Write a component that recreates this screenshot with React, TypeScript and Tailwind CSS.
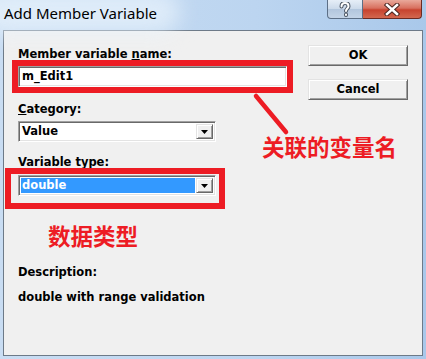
import React from 'react'

const sans = { fontFamily: '"DejaVu Sans", "Liberation Sans", sans-serif' }
const cjk = { fontFamily: '"Noto Sans CJK SC", "Noto Sans", sans-serif' }

// classic sunken 3D border (edit / combo field)
const sunken =
  'border border-t-[#a0a0a0] border-l-[#a0a0a0] border-r-white border-b-white shadow-[inset_1px_1px_0_#696969,inset_-1px_-1px_0_#e3e3e3]'

// classic raised 3D border (push button / drop button)
const raised =
  'border border-t-[#e3e3e3] border-l-[#e3e3e3] border-r-[#696969] border-b-[#696969] shadow-[inset_1px_1px_0_#ffffff,inset_-1px_-1px_0_#a0a0a0]'

function DropArrow() {
  return (
    <div className={`flex h-full w-[17px] items-center justify-center bg-[#f0f0f0] ${raised}`}>
      <svg width="7" height="4" viewBox="0 0 7 4">
        <path d="M0 0h7L3.5 4z" fill="#000" />
      </svg>
    </div>
  )
}

function Combo({ value, selected }: { value: string; selected?: boolean }) {
  return (
    <div className={`flex h-[21px] w-[198px] bg-white p-[2px] ${sunken}`}>
      <div className="flex flex-1 items-center pr-[1px]">
        <div
          className={`flex h-full flex-1 items-center pl-[1px] ${
            selected ? 'bg-[#3399ff] text-white' : 'text-black'
          }`}
        >
          {value}
        </div>
      </div>
      <DropArrow />
    </div>
  )
}

function Label({ children, className = '' }: { children: React.ReactNode; className?: string }) {
  return <div className={`h-[14px] leading-[14px] ${className}`}>{children}</div>
}

function DialogButton({ children }: { children: React.ReactNode }) {
  return (
    <button
      className={`flex h-[21px] w-[100px] items-center justify-center bg-[#f0f0f0] text-black ${raised}`}
    >
      {children}
    </button>
  )
}

export default function App() {
  return (
    <div className="relative h-[359px] w-[426px] overflow-hidden bg-[linear-gradient(90deg,#c9ddf3_0%,#bcd5f0_60%,#a9c8ea_100%)]">
      {/* Title bar */}
      <div className="relative flex h-[30px] items-start">
        <div className="absolute left-[-20px] top-[-10px] h-[44px] w-[200px] rounded-full bg-[#eaf3fc]/70 blur-[10px]" />
        <div
          className="relative pl-[4px] pt-[3px] text-[15px] leading-[20px] text-black"
          style={{ fontFamily: '"Noto Sans", "Open Sans", sans-serif' }}
        >
          Add Member Variable
        </div>
        <div className="ml-auto mr-[4px] flex h-[19px]">
          <div className="flex w-[36px] items-center justify-center rounded-bl-[4px] border border-t-0 border-[#5c6f86] bg-[linear-gradient(180deg,#e6eef7_0%,#ccdaea_48%,#b2c6dd_52%,#c3d4e7_100%)]">
            <svg width="12" height="15" viewBox="0 0 12 15">
              <path
                d="M2.5 4.5C2.5 2 4 1 6 1s3.5 1 3.5 3.2c0 2.2-2.5 2.5-2.5 4.8M7 12.5v.5"
                fill="none"
                stroke="#4a5563"
                strokeWidth="4"
                strokeLinecap="round"
              />
              <path
                d="M2.5 4.5C2.5 2 4 1 6 1s3.5 1 3.5 3.2c0 2.2-2.5 2.5-2.5 4.8M7 12.5v.5"
                fill="none"
                stroke="#fff"
                strokeWidth="2"
                strokeLinecap="round"
              />
            </svg>
          </div>
          <div className="flex w-[59px] items-center justify-center rounded-br-[4px] border border-l-0 border-t-0 border-[#6b2a23] bg-[linear-gradient(180deg,#e9a99b_0%,#d8705f_45%,#c7432f_55%,#d3674f_100%)]">
            <svg width="16" height="13" viewBox="0 0 16 13">
              <path d="M3 2l10 9M13 2L3 11" stroke="#4a2520" strokeWidth="4.5" strokeLinecap="square" />
              <path d="M3 2l10 9M13 2L3 11" stroke="#fff" strokeWidth="2.5" strokeLinecap="square" />
            </svg>
          </div>
        </div>
      </div>

      {/* Client area */}
      <div
        className="mx-[3px] flex h-[326px] border border-[#6d7a88] bg-[#f0f0f0] text-[11.5px] font-bold text-black"
        style={sans}
      >
        {/* Left column */}
        <div className="flex flex-1 flex-col pl-[14px] pt-[16px]">
          <Label>
            Member variable <span className="underline">n</span>ame:
          </Label>
          <div className="-ml-[6px] -mt-[1px] w-[281px] border-[6px] border-[#ed1c24]">
            <div className={`flex h-[21px] w-[269px] items-center bg-white pl-[3px] ${sunken}`}>
              m_Edit1
            </div>
          </div>

          <Label className="mt-[9px]">
            <span className="underline">C</span>ategory:
          </Label>
          <div className="mt-[5px]">
            <Combo value="Value" />
          </div>

          <Label className="mt-[13px]">Variable type:</Label>
          <div className="-ml-[13px] -mt-[1px] w-[220px] border-[6px] border-[#ed1c24] pb-[7px] pl-[7px] pr-[3px] pt-[1px]">
            <Combo value="double" selected />
          </div>

          <div
            className="ml-[30px] mt-[15px] h-[23px] text-[22.5px] font-bold leading-[23px] text-[#ed1c24]"
            style={cjk}
          >
            数据类型
          </div>

          <Label className="mt-[18px]">Description:</Label>
          <Label className="mt-[11px]">double with range validation</Label>
        </div>

        {/* Right column */}
        <div className="flex flex-col gap-[13px] pr-[14px] pt-[14px]">
          <DialogButton>OK</DialogButton>
          <DialogButton>Cancel</DialogButton>
        </div>
      </div>

      {/* Annotations */}
      <svg className="pointer-events-none absolute left-0 top-0" width="426" height="359">
        <line x1="256" y1="96" x2="286" y2="132" stroke="#ed1c24" strokeWidth="4.5" strokeLinecap="round" />
      </svg>
      <div
        className="pointer-events-none absolute left-[262px] top-[135px] text-[22.5px] font-bold leading-[23px] text-[#ed1c24]"
        style={cjk}
      >
        关联的变量名
      </div>
    </div>
  )
}
